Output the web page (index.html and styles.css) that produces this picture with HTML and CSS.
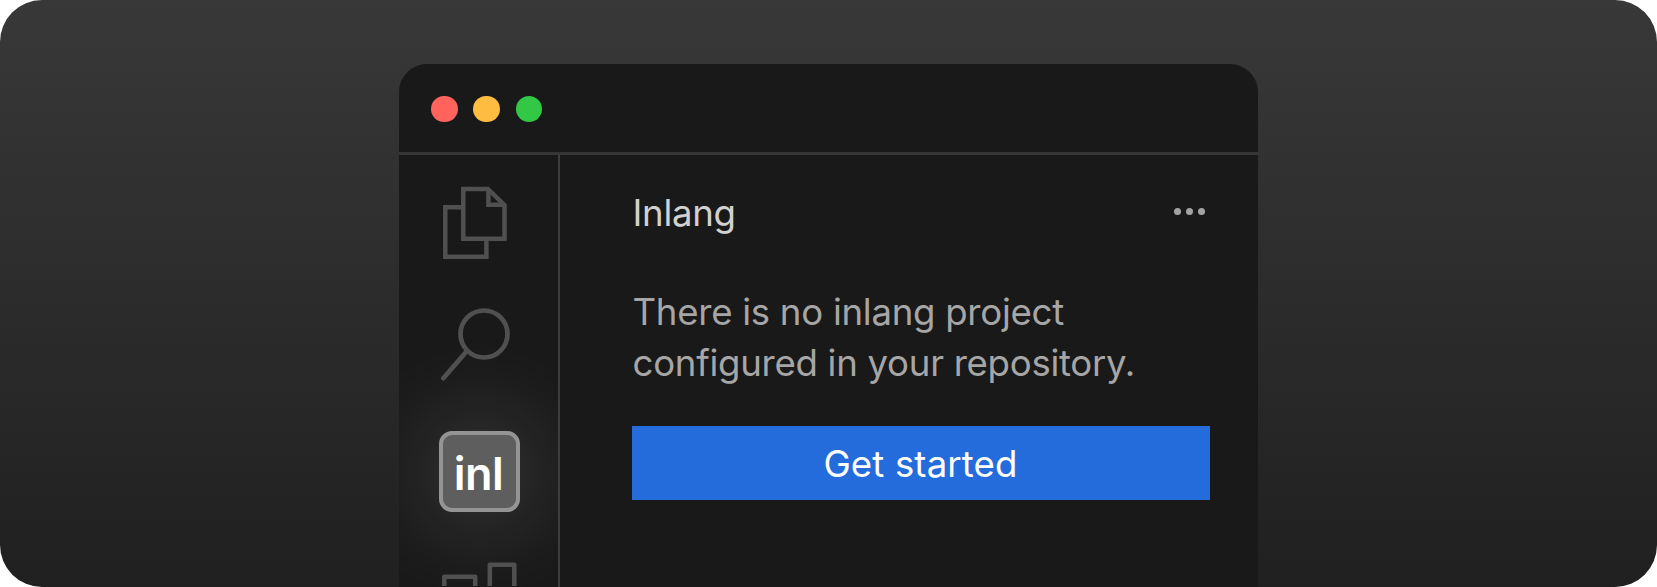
FILE: index.html
```html
<!DOCTYPE html>
<html lang="en">
<head>
<meta charset="utf-8">
<title>Inlang</title>
<link rel="stylesheet" href="styles.css">
</head>
<body>
<div class="banner">
  <div class="window">
    <header class="titlebar">
      <span class="light red"></span>
      <span class="light yellow"></span>
      <span class="light green"></span>
    </header>
    <div class="workspace">
      <nav class="sidebar">
        <svg class="icon files" width="72" height="82" viewBox="439 182 72 82">
          <path d="M461 207.3H445.3V256.7H486.4V241"/>
          <path d="M463.3 189H487.9L504.5 205.2V238.7H463.3Z"/>
          <path d="M488.4 190V204.7H504"/>
        </svg>
        <svg class="icon search" width="72" height="76" viewBox="439 307 72 76">
          <circle cx="484" cy="335" r="23.5"/>
          <path d="M466.5 352.5L443.3 379.2" stroke-linecap="round"/>
        </svg>
        <div class="inl"><span>inl</span></div>
        <svg class="icon blocks" width="80" height="28" viewBox="439 559 80 28">
          <path d="M444.3 590V577.7H475.2V590M489.8 590V565.7H514.3V590" stroke-linejoin="round"/>
        </svg>
      </nav>
      <main class="panel">
        <div class="panel-head">
          <h1>Inlang</h1>
          <div class="more"><i></i><i></i><i></i></div>
        </div>
        <p>There is no inlang project<br>configured in your repository.</p>
        <button>Get started</button>
      </main>
    </div>
  </div>
</div>
</body>
</html>
```
FILE: styles.css
```css
* { box-sizing: border-box; }
body { margin: 0; background: #fff; font-family: Inter, sans-serif; }
.banner {
  height: 587px;
  padding-top: 64px;
  border-radius: 42px;
  overflow: hidden;
  background: linear-gradient(#383838, #202020);
}
.window {
  width: 859px;
  height: 523px;
  margin-left: 399px;
  display: flex;
  flex-direction: column;
  border-radius: 28px 28px 0 0;
  background: #191919;
  overflow: hidden;
}
.titlebar {
  height: 91px;
  flex: none;
  display: flex;
  gap: 15.8px;
  padding: 32px 0 0 32.2px;
  border-bottom: 3px solid #363636;
}
.light { width: 26.4px; height: 26.4px; border-radius: 50%; }
.red { background: #ff635c; }
.yellow { background: #febd40; }
.green { background: #32c846; }
.workspace { flex: 1; display: flex; min-height: 0; }
.sidebar {
  width: 161px;
  flex: none;
  padding: 27px 0 0 40px;
  border-right: 2px solid #3d3d3d;
  overflow: hidden;
}
.icon {
  display: block;
  position: relative;
  z-index: 1;
  fill: none;
  stroke: #505050;
  stroke-width: 4.5;
}
.search { margin-top: 42px; stroke-width: 4.7; }
.inl {
  width: 81px;
  height: 81px;
  margin-top: 49px;
  display: flex;
  justify-content: center;
  border: 4px solid #949494;
  border-radius: 13px;
  background: #5e5e5e;
  box-shadow: 0 0 100px rgba(255, 255, 255, .25);
  color: #fff;
  font-size: 45px;
  font-weight: 600;
  line-height: 78px;
  letter-spacing: -.6px;
  padding-right: 2px;
}
.blocks { margin-top: 46px; }
.panel { flex: 1; padding: 31px 48px 0 73px; }
.panel-head { display: flex; justify-content: space-between; height: 54px; }
h1, p { margin: 0 0 0 -.5px; font-weight: 400; font-size: 36.6px; letter-spacing: -.27px; white-space: nowrap; }
h1 { color: #d1d1d1; line-height: 54px; }
.more { display: flex; gap: 4.7px; padding: 22px 5.3px 0 0; }
.more i { width: 7px; height: 7px; border-radius: 50%; background: #a3a3a3; }
p { margin-top: 47px; color: #a6a6a6; line-height: 51px; }
button {
  display: block;
  width: 578px;
  height: 74px;
  margin: 37px 0 0 -1px;
  padding: 2px 1px 0 0;
  border: 0;
  background: #246bdb;
  color: #fff;
  font: 400 36.6px/72px Inter, sans-serif;
  letter-spacing: .15px;
}
```
